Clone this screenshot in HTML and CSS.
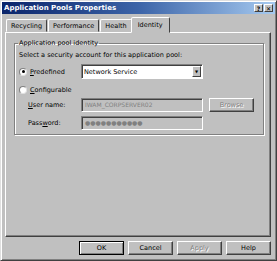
FILE: index.html
```html
<!DOCTYPE html>
<html lang="en">
  <head>
    <meta charset="UTF-8" />
    <title>Application Pools Properties</title>
    <link rel="stylesheet" href="styles.css">
  </head>
  <body>
    <div class="window">
      <div class="titlebar">
        <span class="title">Application Pools Properties</span>
        <span class="caption-buttons">
          <span class="cap-btn">?</span>
          <span class="cap-btn">&#x2715;</span>
        </span>
      </div>

      <div class="tabs">
        <span class="tab">Recycling</span>
        <span class="tab">Performance</span>
        <span class="tab">Health</span>
        <span class="tab active">Identity</span>
      </div>

      <div class="panel">
        <fieldset class="group">
          <legend>Application pool identity</legend>
          <p class="hint">Select a security account for this application pool:</p>

          <div class="row">
            <label class="radio-label"><span class="radio checked"></span><span><u>P</u>redefined</span></label>
            <div class="select">
              <span class="select-text">Network Service</span>
              <span class="select-arrow">&#9660;</span>
            </div>
          </div>

          <div class="row short">
            <label class="radio-label"><span class="radio"></span><span><u>C</u>onfigurable</span></label>
          </div>

          <div class="row sub">
            <span class="field-label"><u>U</u>ser name:</span>
            <div class="textbox">IWAM_CORPSERVER02</div>
            <span class="button disabled small">Browse</span>
          </div>

          <div class="row sub">
            <span class="field-label">Pass<u>w</u>ord:</span>
            <div class="textbox">&#9679;&#9679;&#9679;&#9679;&#9679;&#9679;&#9679;&#9679;&#9679;&#9679;&#9679;</div>
          </div>
        </fieldset>
      </div>

      <div class="actions">
        <span class="button default">OK</span>
        <span class="button">Cancel</span>
        <span class="button disabled">Apply</span>
        <span class="button">Help</span>
      </div>
    </div>
  </body>
</html>
```

FILE: styles.css
```css
body {
  margin: 0;
  padding: 0;
  font-family: "DejaVu Sans", sans-serif;
  font-size: 6.5px;
  color: #000;
  background: #c0c0c0;
}
.window {
  width: 277px;
  height: 261px;
  box-sizing: border-box;
  background: #c0c0c0;
  border: 1px solid;
  border-color: #dfdfdf #404040 #404040 #dfdfdf;
  box-shadow: inset 1px 1px 0 #fff, inset -1px -1px 0 #808080;
  padding: 1px;
  display: flex;
  flex-direction: column;
}
.titlebar {
  height: 12px;
  display: flex;
  align-items: center;
  justify-content: space-between;
  padding: 0 2px;
  background: linear-gradient(to right, #0a246a, #3c64a8 50%, #a6caf0);
  color: #fff;
}
.title {
  font-weight: bold;
  font-size: 7px;
}
.caption-buttons {
  display: flex;
  gap: 1px;
}
.cap-btn {
  width: 9px;
  height: 8px;
  box-sizing: border-box;
  background: #c0c0c0;
  color: #000;
  font-size: 6px;
  font-weight: bold;
  line-height: 7px;
  text-align: center;
  border: 1px solid;
  border-color: #fff #404040 #404040 #fff;
}
.tabs {
  display: flex;
  align-items: flex-end;
  margin: 3px 0 0 4px;
  height: 15px;
}
.tab {
  height: 13px;
  line-height: 12px;
  padding: 0 4px;
  box-sizing: border-box;
  border: 1px solid;
  border-color: #fff #404040 transparent #fff;
  border-radius: 2px 2px 0 0;
  margin-right: 1px;
}
.tab.active {
  height: 16px;
  line-height: 14px;
  margin: 0 0 -1px -2px;
  padding: 0 6px;
  background: #c0c0c0;
  position: relative;
  z-index: 1;
}
.panel {
  flex: 1;
  margin: 0 4px 0 3px;
  border: 1px solid;
  border-color: #fff #404040 #404040 #fff;
  box-shadow: inset -1px -1px 0 #808080;
  padding: 6px 6px 0 8px;
}
.group {
  margin: 0;
  padding: 1px 0 5px 4px;
  height: 96px;
  box-sizing: border-box;
  border: 1px solid #808080;
  box-shadow: 1px 1px 0 #fff, inset 1px 1px 0 #fff;
}
.group legend {
  padding: 0 1px;
  margin-left: -1px;
}
.hint {
  margin: 3px 0 5px 0;
}
.row {
  display: flex;
  align-items: center;
  height: 15px;
  margin-bottom: 4px;
}
.row.short {
  height: 13px;
  margin-bottom: 2px;
}
.row.sub {
  height: 14px;
  margin-bottom: 4px;
}
.radio-label {
  width: 62px;
  display: flex;
  align-items: center;
  gap: 3px;
}
.radio {
  width: 6px;
  height: 6px;
  border-radius: 50%;
  background: #fff;
  border: 1px solid;
  border-color: #808080 #e0e0e0 #e0e0e0 #808080;
  display: inline-flex;
  align-items: center;
  justify-content: center;
}
.radio.checked::after {
  content: "";
  width: 3px;
  height: 3px;
  border-radius: 50%;
  background: #000;
}
.select {
  width: 122px;
  height: 15px;
  box-sizing: border-box;
  background: #fff;
  border: 1px solid;
  border-color: #808080 #fff #fff #808080;
  box-shadow: inset 1px 1px 0 #404040;
  display: flex;
  align-items: center;
  justify-content: space-between;
  padding: 0 1px 0 2px;
}
.select-arrow {
  width: 9px;
  height: 11px;
  box-sizing: border-box;
  background: #c0c0c0;
  font-size: 4px;
  line-height: 9px;
  text-align: center;
  border: 1px solid;
  border-color: #fff #404040 #404040 #fff;
}
.field-label {
  width: 53px;
  padding-left: 9px;
}
.textbox {
  width: 122px;
  height: 14px;
  box-sizing: border-box;
  background: #c0c0c0;
  color: #808080;
  border: 1px solid;
  border-color: #808080 #fff #fff #808080;
  box-shadow: inset 1px 1px 0 #404040;
  line-height: 12px;
  padding-left: 3px;
  font-size: 6px;
}
.actions {
  display: flex;
  justify-content: flex-end;
  gap: 4px;
  padding: 4px 4px 4px 0;
}
.button {
  width: 45px;
  height: 14px;
  box-sizing: border-box;
  text-align: center;
  line-height: 12px;
  border: 1px solid;
  border-color: #fff #404040 #404040 #fff;
  box-shadow: inset -1px -1px 0 #808080;
  background: #c0c0c0;
}
.button.default {
  outline: 1px solid #000;
  outline-offset: -1px;
  border-color: #000;
  box-shadow: inset 1px 1px 0 #fff, inset -1px -1px 0 #808080;
}
.button.disabled {
  color: #808080;
  text-shadow: 1px 1px 0 #fff;
}
.button.small {
  margin-left: 6px;
}
```
